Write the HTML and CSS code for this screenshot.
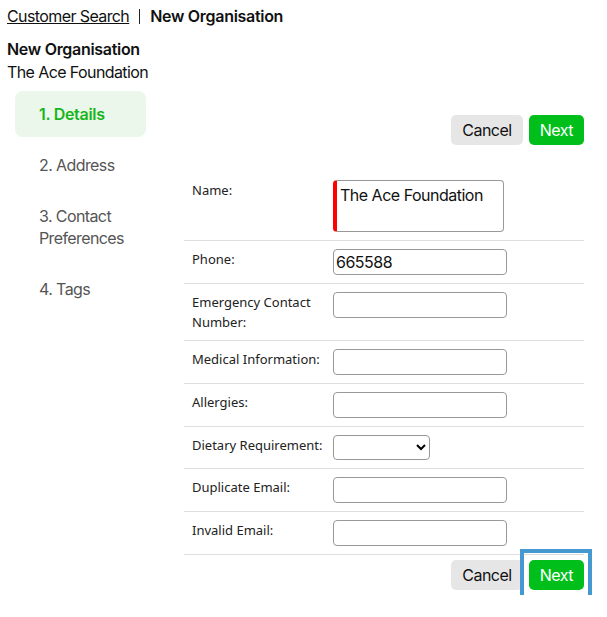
FILE: index.html
```html
<!DOCTYPE html>
<html lang="en">
<head>
    <meta charset="UTF-8">
    <meta name="viewport" content="width=device-width, initial-scale=1.0">
    <title>New Organisation</title>
    <link rel="stylesheet" href="styles.css">
</head>
<body>
    <div class="crumbs">
        <a href="#" class="crumb-link">Customer Search</a>
        <span class="crumb-sep"></span>
        <span class="crumb-current">New Organisation</span>
    </div>

    <div class="page-head">
        <h1>New Organisation</h1>
        <div class="subtitle">The Ace Foundation</div>
    </div>

    <div class="wizard">
        <ul class="steps">
            <li class="step active">1. Details</li>
            <li class="step">2. Address</li>
            <li class="step">3. Contact Preferences</li>
            <li class="step">4. Tags</li>
        </ul>

        <div class="panel">
            <div class="actions top">
                <button class="btn btn-cancel">Cancel</button>
                <button class="btn btn-next">Next</button>
            </div>

            <table class="form">
                <tr>
                    <td class="lbl">Name:</td>
                    <td><textarea class="field required">The Ace Foundation</textarea></td>
                </tr>
                <tr>
                    <td class="lbl">Phone:</td>
                    <td><input class="field" type="text" value="665588"></td>
                </tr>
                <tr>
                    <td class="lbl">Emergency Contact Number:</td>
                    <td><input class="field" type="text"></td>
                </tr>
                <tr>
                    <td class="lbl">Medical Information:</td>
                    <td><input class="field" type="text"></td>
                </tr>
                <tr>
                    <td class="lbl">Allergies:</td>
                    <td><input class="field" type="text"></td>
                </tr>
                <tr>
                    <td class="lbl">Dietary Requirement:</td>
                    <td>
                        <select class="pick">
                            <option></option>
                        </select>
                    </td>
                </tr>
                <tr>
                    <td class="lbl">Duplicate Email:</td>
                    <td><input class="field" type="text"></td>
                </tr>
                <tr>
                    <td class="lbl">Invalid Email:</td>
                    <td><input class="field" type="text"></td>
                </tr>
            </table>

            <div class="actions bottom">
                <button class="btn btn-cancel">Cancel</button>
                <button class="btn btn-next focused">Next</button>
            </div>
        </div>
    </div>
</body>
</html>
```

FILE: styles.css
```css
*{
    margin: 0;
    padding: 0;
    box-sizing: border-box;
}
body{
    font-family: Inter, "Noto Sans", sans-serif;
    font-size: 16px;
    letter-spacing: -0.6px;
    color: #111;
    background: #fff;
    padding: 5px 7px;
}
.crumbs{
    display: flex;
    align-items: center;
    gap: 10px;
    line-height: 22px;
}
.crumb-link{
    color: #111;
}
.crumb-sep{
    width: 1px;
    height: 15px;
    background: #222;
    margin-top: 1px;
}
.crumb-current{
    font-weight: 600;
    letter-spacing: -0.3px;
}
.page-head{
    margin-top: 11px;
}
h1{
    font-size: 16px;
    font-weight: 600;
    letter-spacing: -0.3px;
    line-height: 22px;
}
.subtitle{
    line-height: 24px;
}
.wizard{
    display: flex;
    align-items: flex-start;
    gap: 38px;
    margin-top: 7px;
    padding-left: 8px;
}
.steps{
    list-style: none;
    width: 131px;
    flex-shrink: 0;
}
.step{
    padding: 12px 24px;
    line-height: 22px;
    color: #555;
    border-radius: 8px;
    margin-bottom: 5px;
}
.step.active{
    background: #eaf7ea;
    color: #17b51c;
    font-weight: 600;
    letter-spacing: -0.3px;
}
.panel{
    width: 400px;
}
.actions{
    display: flex;
    justify-content: flex-end;
    gap: 6px;
}
.actions.top{
    margin-top: 24px;
    margin-bottom: 27px;
}
.actions.bottom{
    margin-top: 5px;
}
.btn{
    font-family: Inter, "Noto Sans", sans-serif;
    font-size: 16px;
    letter-spacing: -0.5px;
    height: 30px;
    padding: 0 11px;
    border: none;
    border-radius: 5px;
    cursor: pointer;
}
.btn-cancel{
    background: #e6e6e6;
    color: #111;
}
.btn-next{
    background: #00bf1b;
    color: #fff;
}
/* keyboard focus ring, square and drawn over the neighbour */
.btn-next.focused{
    position: relative;
}
.btn-next.focused::after{
    content: "";
    position: absolute;
    top: -11px;
    bottom: -9px;
    left: -9px;
    right: -8px;
    border: 4px solid #4599d0;
}
.form{
    width: 100%;
    border-collapse: collapse;
    font-family: "Noto Sans", "DejaVu Sans", sans-serif;
    font-size: 13px;
    letter-spacing: 0;
    color: #222;
}
.form tr{
    border-bottom: 1px solid #ddd;
}
.form td{
    padding: 8px 0;
    vertical-align: top;
    line-height: 20px;
}
.form td.lbl{
    width: 149px;
    padding-left: 8px;
    padding-right: 4px;
}
.field{
    display: block;
    width: 174px;
    height: 26px;
    border: 1px solid #999;
    border-radius: 4px;
    padding: 2px 2px;
    font-family: Inter, "Noto Sans", sans-serif;
    font-size: 16px;
    letter-spacing: -0.5px;
    color: #111;
}
textarea.field{
    width: 171px;
    height: 52px;
    resize: none;
    padding: 4px 3px;
}
.field.required{
    border-left: 4px solid #f00;
}
.pick{
    display: block;
    width: 97px;
    height: 25px;
    border: 1px solid #999;
    border-radius: 4px;
    background: #fff;
}
```
